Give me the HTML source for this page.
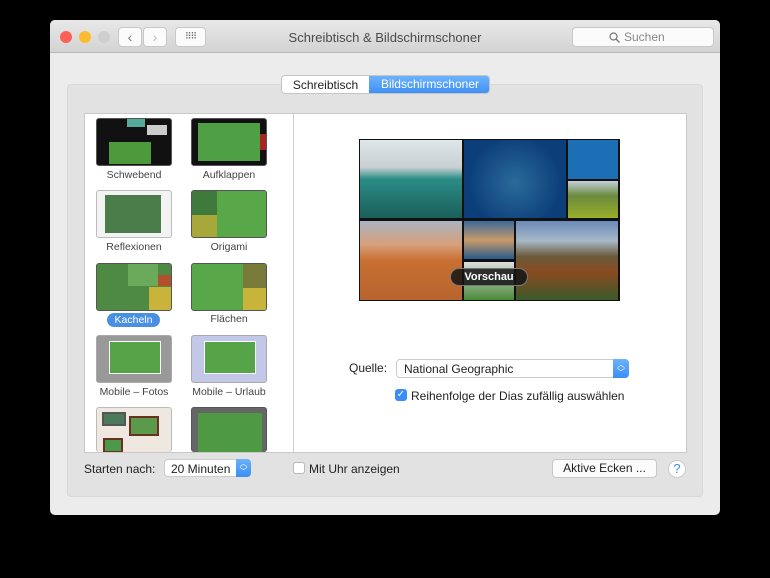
<!DOCTYPE html>
<html><head><meta charset="utf-8"><style>
*{box-sizing:border-box;margin:0;padding:0}
body{width:770px;height:578px;background:#000;font-family:"Liberation Sans",sans-serif;position:relative;overflow:hidden;font-size:12px;color:#222}
.abs{position:absolute}
.win{left:50px;top:20px;width:670px;height:495px;background:#ececec;border-radius:5px;overflow:hidden}
.tb{left:0;top:0;width:670px;height:33px;background:linear-gradient(#e8e8e8,#d3d3d3);border-bottom:1px solid #b8b8b8}
.dot{width:12px;height:12px;border-radius:50%;top:11px}
.btn{background:#fbfbfb;border:1px solid #c8c8c8;border-radius:4px}
.thumb{width:76px;height:48px;border-radius:3px;border:1px solid #555;overflow:hidden}
.lbl{width:96px;text-align:center;font-size:10.5px;color:#444}
.t{position:absolute}
</style></head><body>
<div class="abs win">
 <div class="abs tb">
  <div class="abs dot" style="left:10px;background:#fc5f57"></div>
  <div class="abs dot" style="left:29px;background:#fdbc2e"></div>
  <div class="abs dot" style="left:48px;background:#cfcfcf"></div>
  <div class="abs btn" style="left:68px;top:7px;width:24px;height:20px;text-align:center;line-height:18px;color:#777;font-size:14px">‹</div>
  <div class="abs btn" style="left:93px;top:7px;width:24px;height:20px;text-align:center;line-height:18px;color:#bbb;font-size:14px">›</div>
  <div class="abs btn" style="left:125px;top:7px;width:31px;height:20px;text-align:center;line-height:17px;color:#666;font-size:9px;letter-spacing:-1px">⠿⠿</div>
  <div class="abs" style="left:0;width:670px;top:10px;text-align:center;font-size:13px;color:#4a4a4a">Schreibtisch &amp; Bildschirmschoner</div>
  <div class="abs btn" style="left:522px;top:7px;width:142px;height:20px;font-size:12px;color:#888;line-height:18px;padding-left:36px">
   <svg class="t" style="left:36px;top:4px" width="11" height="11" viewBox="0 0 11 11"><circle cx="4.5" cy="4.5" r="3.5" fill="none" stroke="#777" stroke-width="1.2"/><line x1="7" y1="7" x2="10.5" y2="10.5" stroke="#777" stroke-width="1.3"/></svg>
   <span style="margin-left:15px">Suchen</span></div>
 </div>
 <div class="abs" style="left:17px;top:64px;width:636px;height:413px;background:#e2e2e2;border-radius:4px;border:1px solid #d8d8d8"></div>
 <div class="abs" style="left:231px;top:55px;width:209px;height:19px;border:1px solid #c5c5c5;border-radius:4px;background:#fff;overflow:hidden;font-size:12px">
  <div class="t" style="left:0;width:87px;top:2px;text-align:center;color:#222">Schreibtisch</div>
  <div class="t" style="left:87px;top:0;width:122px;height:19px;background:linear-gradient(#6cb2fc,#3b8ef6);color:#fff;text-align:center;line-height:17px">Bildschirmschoner</div>
 </div>
 <div class="abs" style="left:34px;top:93px;width:603px;height:340px;background:#fff;border:1px solid #c9c9c9"></div>
 <div class="abs" style="left:243px;top:94px;width:1px;height:338px;background:#cfcfcf"></div>
</div>

<!-- thumbnails -->
<div class="abs thumb" style="left:96px;top:118px;background:#111"><div class="t" style="left:12px;top:23px;width:42px;height:22px;background:#4c9a3c"></div><div class="t" style="left:50px;top:6px;width:20px;height:10px;background:#ccc"></div><div class="t" style="left:30px;top:0;width:18px;height:8px;background:#5a9"></div></div>
<div class="abs lbl" style="left:86px;top:169px">Schwebend</div>
<div class="abs thumb" style="left:191px;top:118px;background:#111"><div class="t" style="left:6px;top:4px;width:62px;height:38px;background:#4fa044"></div><div class="t" style="left:68px;top:15px;width:8px;height:16px;background:#a22"></div></div>
<div class="abs lbl" style="left:181px;top:169px">Aufklappen</div>
<div class="abs thumb" style="left:96px;top:190px;background:#f3f3f3;border-color:#bbb"><div class="t" style="left:8px;top:4px;width:56px;height:38px;background:#4b7d4b"></div></div>
<div class="abs lbl" style="left:86px;top:241px">Reflexionen</div>
<div class="abs thumb" style="left:191px;top:190px;background:#58a84a"><div class="t" style="left:0;top:0;width:25px;height:24px;background:#3f7a3c"></div><div class="t" style="left:0;top:24px;width:25px;height:24px;background:#a8a83a"></div></div>
<div class="abs lbl" style="left:181px;top:241px">Origami</div>
<div class="abs thumb" style="left:96px;top:263px;background:#4f8a44"><div class="t" style="left:31px;top:0;width:30px;height:22px;background:#6aaa5a"></div><div class="t" style="left:61px;top:11px;width:15px;height:11px;background:#b2502e"></div><div class="t" style="left:52px;top:23px;width:24px;height:25px;background:#c8b43a"></div></div>
<div class="abs" style="left:107px;top:313px;width:53px;height:14px;border-radius:7px;background:#4a90e2;color:#fff;font-size:10.5px;text-align:center;line-height:14px">Kacheln</div>
<div class="abs thumb" style="left:191px;top:263px;background:#58a84a"><div class="t" style="left:51px;top:0;width:25px;height:24px;background:#7a7a3a"></div><div class="t" style="left:51px;top:24px;width:25px;height:24px;background:#c8b43a"></div></div>
<div class="abs lbl" style="left:181px;top:313px">Flächen</div>
<div class="abs thumb" style="left:96px;top:335px;background:#999;border-color:#aaa"><div class="t" style="left:12px;top:5px;width:52px;height:33px;background:#55a548;border:1px solid #fff"></div></div>
<div class="abs lbl" style="left:86px;top:386px">Mobile – Fotos</div>
<div class="abs thumb" style="left:191px;top:335px;background:#c4c8e8;border-color:#aaa"><div class="t" style="left:12px;top:5px;width:52px;height:33px;background:#55a548;border:1px solid #fff"></div></div>
<div class="abs lbl" style="left:181px;top:386px">Mobile – Urlaub</div>
<div class="abs thumb" style="left:96px;top:407px;height:45px;background:#eee8e0;border-color:#bbb;border-bottom:none"><div class="t" style="left:5px;top:4px;width:24px;height:14px;background:#4a7a5a;border:2px solid #555"></div><div class="t" style="left:32px;top:8px;width:30px;height:20px;background:#5a9a4a;border:2px solid #6a3020"></div><div class="t" style="left:6px;top:30px;width:20px;height:15px;background:#4a9a4a;border:2px solid #6a3020"></div></div>
<div class="abs thumb" style="left:191px;top:407px;height:45px;background:#666;border-bottom:none"><div class="t" style="left:6px;top:5px;width:64px;height:40px;background:#4e9a44"></div></div>

<!-- preview -->
<div class="abs" style="left:359px;top:139px;width:261px;height:162px;background:#111">
 <div class="t" style="left:1px;top:1px;width:102px;height:78px;background:linear-gradient(#dfe6ea 0%,#c8d0d4 35%,#2b8c86 50%,#1b5f5a 100%)"></div>
 <div class="t" style="left:105px;top:1px;width:102px;height:78px;background:radial-gradient(circle at 50% 55%,#2a6a9a,#0c3f7a 70%)"></div>
 <div class="t" style="left:209px;top:1px;width:50px;height:39px;background:#1d6fb5"></div>
 <div class="t" style="left:209px;top:42px;width:50px;height:37px;background:linear-gradient(#c4d0d8,#6b8a3e 40%,#9aaf2a)"></div>
 <div class="t" style="left:1px;top:82px;width:102px;height:79px;background:linear-gradient(#aab4c0,#d7a07a 30%,#c96f33 50%,#b8642e)"></div>
 <div class="t" style="left:105px;top:82px;width:50px;height:38px;background:linear-gradient(#3a6a9a,#c89a6a 50%,#2a5a8a)"></div>
 <div class="t" style="left:105px;top:123px;width:50px;height:38px;background:linear-gradient(#ddd,#4a8a3a)"></div>
 <div class="t" style="left:157px;top:82px;width:102px;height:79px;background:linear-gradient(#6a8ab8,#a8b8c8 25%,#6a5a3a 45%,#8a4a20 65%,#3a5a2a)"></div>
 <div class="t" style="left:91px;top:129px;width:78px;height:18px;border-radius:9px;background:rgba(20,20,20,.85);border:1px solid #777;color:#fff;font-weight:bold;font-size:11px;text-align:center;line-height:16px">Vorschau</div>
</div>

<div class="abs" style="left:349px;top:361px;font-size:12px">Quelle:</div>
<div class="abs" style="left:396px;top:359px;width:233px;height:19px;background:#fff;border:1px solid #ccc;border-radius:4px;font-size:12px;padding:2px 7px;color:#222">National Geographic</div>
<div class="abs" style="left:613px;top:359px;width:16px;height:19px;background:linear-gradient(#6cb2fc,#3b8ef6);border-radius:0 4px 4px 0;color:#fff;font-size:8px;text-align:center;line-height:8px;padding-top:2px">︿<br>﹀</div>
<div class="abs" style="left:395px;top:389px;width:12px;height:12px;border-radius:3px;background:#3b8ef6;color:#fff;font-size:10px;text-align:center;line-height:12px">✓</div>
<div class="abs" style="left:411px;top:389px;font-size:12px">Reihenfolge der Dias zufällig auswählen</div>

<div class="abs" style="left:84px;top:462px;font-size:12px">Starten nach:</div>
<div class="abs" style="left:164px;top:459px;width:87px;height:18px;background:#fff;border:1px solid #ccc;border-radius:4px;font-size:12px;padding:2px 6px">20 Minuten</div>
<div class="abs" style="left:236px;top:459px;width:15px;height:18px;background:linear-gradient(#6cb2fc,#3b8ef6);border-radius:0 4px 4px 0;color:#fff;font-size:8px;text-align:center;line-height:8px;padding-top:1px">︿<br>﹀</div>
<div class="abs" style="left:293px;top:462px;width:12px;height:12px;background:#fff;border:1px solid #bbb;border-radius:3px"></div>
<div class="abs" style="left:309px;top:462px;font-size:12px">Mit Uhr anzeigen</div>
<div class="abs btn" style="left:552px;top:459px;width:105px;height:19px;font-size:12px;text-align:center;line-height:17px">Aktive Ecken ...</div>
<div class="abs" style="left:668px;top:460px;width:18px;height:18px;border-radius:50%;background:#fff;border:1px solid #ccc;color:#3b8ef6;font-size:13px;text-align:center;line-height:16px">?</div>
</body></html>
